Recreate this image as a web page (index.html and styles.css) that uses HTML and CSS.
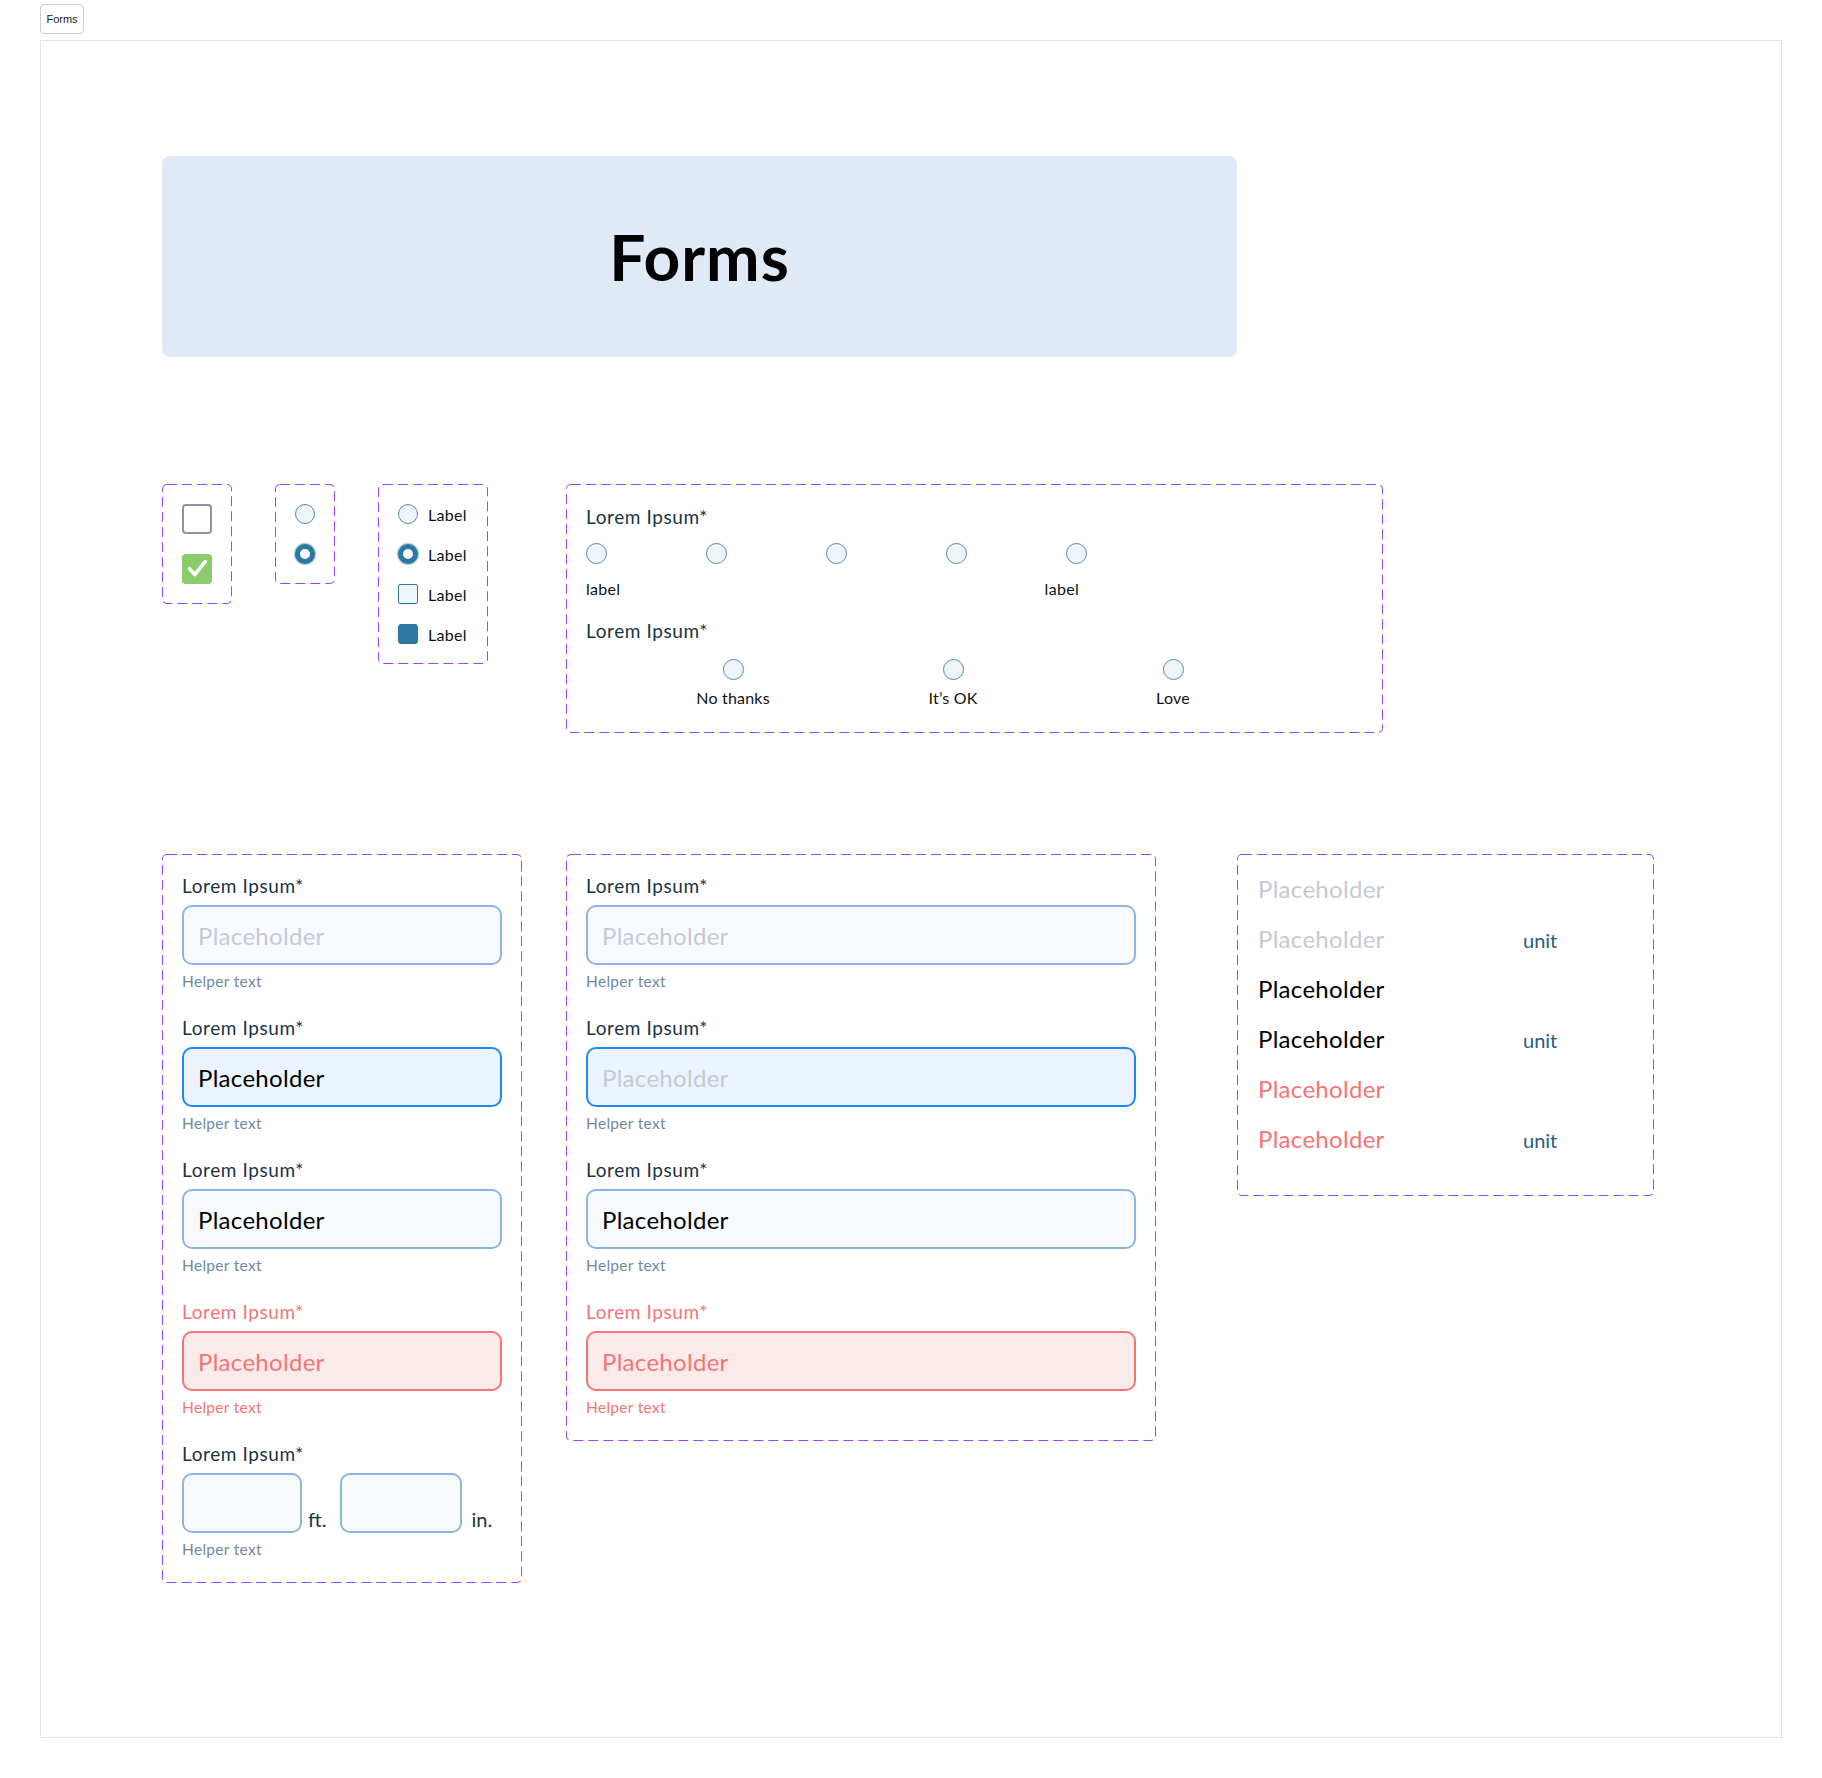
FILE: index.html
```html
<!DOCTYPE html>
<html lang="en">
<head>
<meta charset="utf-8">
<title>Forms</title>
<link rel="stylesheet" href="styles.css">
</head>
<body>
<div class="tag">Forms</div>
<div class="frame">
  <div class="banner"><h1>Forms</h1></div>

  <div class="row row-controls">
    <div class="dash box-check">
      <span class="cb"></span>
      <span class="cb cb-on"><svg viewBox="0 0 30 30" width="30" height="30"><path d="M7.5 14.8L12.8 20.6L23.2 7.6" fill="none" stroke="#fff" stroke-width="3.6" stroke-linecap="round" stroke-linejoin="round"/></svg></span>
    </div>

    <div class="dash box-radio">
      <span class="rd"></span>
      <span class="rd rd-on"></span>
    </div>

    <div class="dash box-list">
      <div class="li"><span class="rd"></span><span>Label</span></div>
      <div class="li"><span class="rd rd-on"></span><span>Label</span></div>
      <div class="li"><span class="sq"></span><span>Label</span></div>
      <div class="li"><span class="sq sq-on"></span><span>Label</span></div>
    </div>

    <div class="dash box-scale">
      <div class="q">Lorem Ipsum*</div>
      <div class="scale5">
        <span class="rd rd-big"></span>
        <span class="rd rd-big"></span>
        <span class="rd rd-big"></span>
        <span class="rd rd-big"></span>
        <span class="rd rd-big"></span>
      </div>
      <div class="scale5-labels"><span>label</span><span>label</span></div>
      <div class="q q2">Lorem Ipsum*</div>
      <div class="scale3">
        <div class="opt"><span class="rd rd-big"></span><span class="opt-label">No thanks</span></div>
        <div class="opt"><span class="rd rd-big"></span><span class="opt-label">It’s OK</span></div>
        <div class="opt"><span class="rd rd-big"></span><span class="opt-label">Love</span></div>
      </div>
    </div>
  </div>

  <div class="row row-inputs">
    <div class="dash box-form">
      <div class="field">
        <div class="flabel">Lorem Ipsum*</div>
        <div class="input is-empty">Placeholder</div>
        <div class="helper">Helper text</div>
      </div>
      <div class="field">
        <div class="flabel">Lorem Ipsum*</div>
        <div class="input is-focus">Placeholder</div>
        <div class="helper">Helper text</div>
      </div>
      <div class="field">
        <div class="flabel">Lorem Ipsum*</div>
        <div class="input is-filled">Placeholder</div>
        <div class="helper">Helper text</div>
      </div>
      <div class="field is-error">
        <div class="flabel">Lorem Ipsum*</div>
        <div class="input">Placeholder</div>
        <div class="helper">Helper text</div>
      </div>
      <div class="field">
        <div class="flabel">Lorem Ipsum*</div>
        <div class="split">
          <div class="input input-ft"></div>
          <span class="split-unit unit-ft">ft.</span>
          <div class="input input-in"></div>
          <span class="split-unit unit-in">in.</span>
        </div>
        <div class="helper">Helper text</div>
      </div>
    </div>

    <div class="dash box-form wide">
      <div class="field">
        <div class="flabel">Lorem Ipsum*</div>
        <div class="input is-empty">Placeholder</div>
        <div class="helper">Helper text</div>
      </div>
      <div class="field">
        <div class="flabel">Lorem Ipsum*</div>
        <div class="input is-focus is-empty">Placeholder</div>
        <div class="helper">Helper text</div>
      </div>
      <div class="field">
        <div class="flabel">Lorem Ipsum*</div>
        <div class="input is-filled">Placeholder</div>
        <div class="helper">Helper text</div>
      </div>
      <div class="field is-error">
        <div class="flabel">Lorem Ipsum*</div>
        <div class="input">Placeholder</div>
        <div class="helper">Helper text</div>
      </div>
    </div>

    <div class="dash box-plain">
      <div class="prow"><span class="pv pv-muted">Placeholder</span></div>
      <div class="prow"><span class="pv pv-muted">Placeholder</span><span class="punit">unit</span></div>
      <div class="prow"><span class="pv">Placeholder</span></div>
      <div class="prow"><span class="pv">Placeholder</span><span class="punit">unit</span></div>
      <div class="prow"><span class="pv pv-error">Placeholder</span></div>
      <div class="prow"><span class="pv pv-error">Placeholder</span><span class="punit">unit</span></div>
    </div>
  </div>
</div>
</body>
</html>
```

FILE: styles.css
```css
* {
  box-sizing: border-box;
}

body {
  margin: 0;
  background: #ffffff;
  font-family: Lato, "Noto Sans", sans-serif;
  color: #111111;
}

.tag {
  margin: 4px 0 0 40px;
  width: 44px;
  height: 30px;
  border: 1px solid #cfcfcf;
  border-radius: 4px;
  font: 11px/28px "Liberation Sans", Arial, sans-serif;
  color: #222222;
  text-align: center;
}

.frame {
  margin: 6px 0 0 40px;
  width: 1742px;
  height: 1698px;
  border: 1px solid #e4e4e4;
  padding: 115px 0 0 121px;
}

.banner {
  width: 1075px;
  height: 201px;
  background: #e0eaf6;
  border-radius: 8px;
  display: flex;
  align-items: center;
  justify-content: center;
}

.banner h1 {
  margin: 0;
  font-family: Lato, sans-serif;
  font-weight: 700;
  font-size: 64px;
  line-height: 1;
  color: #000000;
  letter-spacing: 1px;
}

.row {
  display: flex;
  align-items: flex-start;
}

.row-controls {
  margin-top: 127px;
}

.row-inputs {
  margin-top: 121px;
}

.dash {
  border-radius: 5px;
  background-image: url("data:image/svg+xml,%3Csvg xmlns='http://www.w3.org/2000/svg' width='100%25' height='100%25'%3E%3Crect width='100%25' height='100%25' fill='none' rx='5' ry='5' stroke='%239747FF' stroke-width='2' stroke-dasharray='10 5'/%3E%3C/svg%3E");
  background-repeat: no-repeat;
}

/* checkbox group */
.box-check {
  width: 70px;
  padding: 20px;
  display: flex;
  flex-direction: column;
  gap: 20px;
}

.cb {
  display: block;
  width: 30px;
  height: 30px;
  border: 2px solid #8a94a6;
  border-radius: 4px;
  background: #ffffff;
}

.cb-on {
  border: none;
  background: #8bcb69;
}

.cb-on svg {
  display: block;
}

/* radio group */
.box-radio {
  margin-left: 43px;
  width: 60px;
  padding: 20px;
  display: flex;
  flex-direction: column;
  gap: 20px;
}

.rd {
  display: block;
  flex: none;
  width: 20px;
  height: 20px;
  border-radius: 50%;
  border: 1px solid #4f8db3;
  background: #eef4f7;
}

.rd-big {
  width: 21px;
  height: 21px;
}

.rd-on {
  border: 5px solid #2b79a1;
  background: #ffffff;
  box-shadow: 0 0 1px 1px rgba(43, 121, 161, 0.45);
}

/* labelled list */
.box-list {
  margin-left: 43px;
  width: 110px;
  padding: 20px;
  display: flex;
  flex-direction: column;
  gap: 20px;
}

.li {
  display: flex;
  align-items: center;
  gap: 10px;
  height: 20px;
  font-size: 16px;
  letter-spacing: 0.3px;
  color: #111111;
}

.sq {
  display: block;
  flex: none;
  width: 20px;
  height: 20px;
  border: 1px solid #2b79a1;
  border-radius: 2px;
  background: #eef4f7;
}

.sq-on {
  background: #2b79a1;
  border-radius: 3px;
}

/* scale question */
.box-scale {
  margin-left: 78px;
  width: 817px;
  height: 249px;
  padding: 20px;
}

.q {
  font-size: 19px;
  line-height: 26px;
  letter-spacing: 0.6px;
  color: #1a3342;
}

.q2 {
  margin-top: 19px;
}

.scale5 {
  display: flex;
  gap: 99px;
  margin-top: 13px;
}

.scale5-labels {
  width: 493px;
  display: flex;
  justify-content: space-between;
  margin-top: 15px;
  font-size: 16px;
  line-height: 20px;
  letter-spacing: 0.3px;
}

.scale3 {
  display: flex;
  gap: 100px;
  margin-top: 15px;
  margin-left: 87px;
}

.opt {
  width: 120px;
  display: flex;
  flex-direction: column;
  align-items: center;
}

.opt-label {
  margin-top: 8px;
  font-size: 16px;
  line-height: 20px;
  letter-spacing: 0.2px;
}

/* input forms */
.box-form {
  width: 360px;
  padding: 20px 20px 24px 20px;
}

.box-form.wide {
  width: 590px;
  margin-left: 44px;
}

.field + .field {
  margin-top: 25px;
}

.flabel {
  font-size: 19px;
  line-height: 24px;
  letter-spacing: 0.6px;
  color: #1a3342;
}

.input {
  margin-top: 7px;
  height: 60px;
  border: 2px solid #8db4e2;
  border-radius: 10px;
  background: #f7fbff;
  padding: 0 14px;
  display: flex;
  align-items: center;
  font-size: 24px;
  letter-spacing: 0.3px;
  color: #000000;
}

.input.is-empty {
  color: #c6cad1;
}

.input.is-focus {
  border-color: #1e88f5;
  background: #ebf4fe;
}

.helper {
  margin-top: 6px;
  font-size: 15.5px;
  line-height: 20px;
  letter-spacing: 0.3px;
  color: #7089a3;
}

.is-error .flabel,
.is-error .helper {
  color: #f87474;
}

.is-error .input {
  border-color: #f87474;
  background: #fbeaea;
  color: #f87474;
}

.split {
  display: flex;
  align-items: flex-end;
  margin-top: 7px;
}

.split .input {
  margin-top: 0;
}

.input-ft {
  width: 120px;
}

.input-in {
  width: 122px;
}

.split-unit {
  font-size: 20px;
  line-height: 20px;
  padding-bottom: 4px;
  color: #1a3342;
}

.unit-ft {
  margin: 0 14px 0 6px;
}

.unit-in {
  margin-left: 9px;
}

/* plain values */
.box-plain {
  width: 417px;
  margin-left: 81px;
  padding: 10px 20px 32px 21px;
}

.prow {
  display: flex;
  align-items: baseline;
  height: 50px;
  line-height: 50px;
}

.pv {
  width: 265px;
  font-size: 24px;
  letter-spacing: 0.3px;
  color: #000000;
}

.pv-muted {
  color: #c6cad1;
}

.pv-error {
  color: #f87474;
}

.punit {
  font-size: 20px;
  color: #245f84;
}
```
